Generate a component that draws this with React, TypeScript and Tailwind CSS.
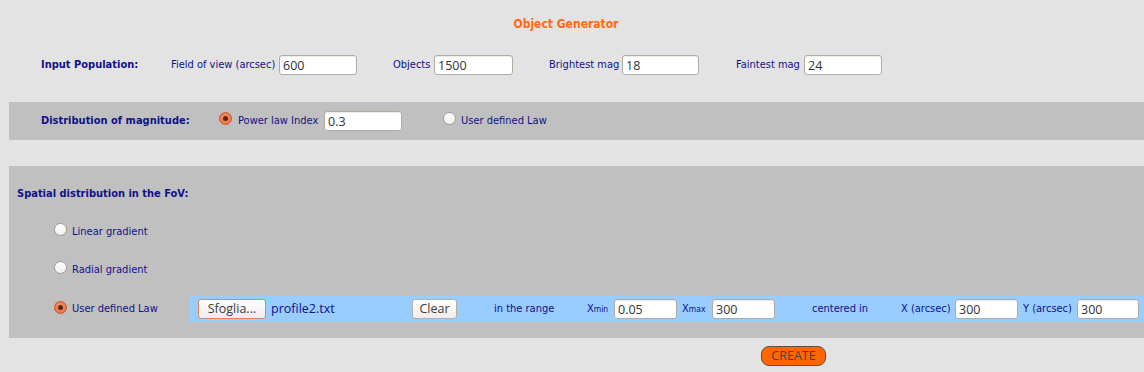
import React from "react";

const LABEL = "text-[11px] text-[#10108a] whitespace-nowrap";
const FONT = { fontFamily: '"DejaVu Sans Condensed", "Liberation Sans", sans-serif' };
const INFONT = { fontFamily: '"Open Sans", "DejaVu Sans", sans-serif' };

function Input({ value, w }: { value: string; w: string }) {
  return (
    <input
      readOnly
      defaultValue={value}
      style={INFONT}
      className={`${w} h-[20px] shrink-0 rounded-[3px] border border-[#b3aaa1] bg-white px-[3px] text-[12.5px] text-[#333] outline-none shadow-[inset_0_1px_1px_rgba(0,0,0,0.08)]`}
    />
  );
}

function Radio({ checked }: { checked?: boolean }) {
  if (checked) {
    return (
      <div className="flex h-[13px] w-[13px] shrink-0 items-center justify-center rounded-full border border-[#c4582c] bg-[radial-gradient(circle_at_50%_40%,#f8936a,#ea6a3a)]">
        <div className="h-[5px] w-[5px] rounded-full bg-[#5b2614]" />
      </div>
    );
  }
  return (
    <div className="h-[13px] w-[13px] shrink-0 rounded-full border border-[#a59d95] bg-[linear-gradient(#ffffff,#f1efed)]" />
  );
}

export default function App() {
  return (
    <div className="h-[372px] w-[1144px] overflow-hidden bg-[#e3e3e3]" style={FONT}>
      {/* Title */}
      <div className="flex h-[48px] items-center justify-center pr-[12px]">
        <span className="text-[12px] font-bold text-[#ff6a10]">Object Generator</span>
      </div>

      {/* Input population */}
      <div className="mt-[7px] flex h-[20px] items-center pl-[41px]">
        <div className={`${LABEL} w-[130px] font-bold`}>Input Population:</div>
        <div className={`${LABEL} w-[108px]`}>Field of view (arcsec)</div>
        <Input value="600" w="w-[78px]" />
        <div className={`${LABEL} w-[77px] pl-[36px]`}>Objects</div>
        <Input value="1500" w="w-[79px]" />
        <div className={`${LABEL} w-[109px] pl-[36px]`}>Brightest mag</div>
        <Input value="18" w="w-[77px]" />
        <div className={`${LABEL} w-[105px] pl-[37px]`}>Faintest mag</div>
        <Input value="24" w="w-[78px]" />
      </div>

      {/* Distribution of magnitude */}
      <div className="ml-[9px] mt-[27px] flex h-[38px] items-center bg-[#c0c0c0] pl-[32px]">
        <div className={`${LABEL} w-[178px] font-bold`}>Distribution of magnitude:</div>
        <div className="mb-[5px]">
          <Radio checked />
        </div>
        <div className={`${LABEL} w-[92px] pl-[6px]`}>Power law Index</div>
        <Input value="0.3" w="w-[78px]" />
        <div className="mb-[5px] ml-[41px]">
          <Radio />
        </div>
        <div className={`${LABEL} pl-[5px]`}>User defined Law</div>
      </div>

      {/* Spatial distribution */}
      <div className="ml-[9px] mt-[26px] flex h-[172px] flex-col bg-[#c0c0c0]">
        <div className={`${LABEL} mt-[21px] flex h-[14px] items-center pl-[8px] font-bold`}>
          Spatial distribution in the FoV:
        </div>
        <div className="mt-[24px] flex h-[14px] items-center pl-[45px]">
          <div className="mb-[5px]">
            <Radio />
          </div>
          <div className={`${LABEL} pl-[5px]`}>Linear gradient</div>
        </div>
        <div className="mt-[24px] flex h-[14px] items-center pl-[45px]">
          <div className="mb-[5px]">
            <Radio />
          </div>
          <div className={`${LABEL} pl-[5px]`}>Radial gradient</div>
        </div>
        <div className="mt-[19px] flex h-[26px] items-center">
          <div className="flex w-[181px] items-center pl-[45px]">
            <div className="mb-[3px]">
              <Radio checked />
            </div>
            <div className={`${LABEL} pl-[5px]`}>User defined Law</div>
          </div>
          <div className="flex h-[26px] flex-1 items-center bg-[#99ccff] pl-[8px]">
            <button
              style={INFONT}
              className="h-[20px] w-[68px] shrink-0 rounded-[3px] border border-[#e5855a] bg-[linear-gradient(#ffffff,#efedeb)] text-[12.5px] text-[#3c3c3c]"
            >
              Sfoglia...
            </button>
            <div style={INFONT} className="w-[146px] shrink-0 pl-[5px] text-[12.5px] text-[#10108a]">
              profile2.txt
            </div>
            <button
              style={INFONT}
              className="h-[20px] w-[45px] shrink-0 rounded-[3px] border border-[#b8b0a8] bg-[linear-gradient(#ffffff,#efedeb)] text-[12.5px] text-[#3c3c3c]"
            >
              Clear
            </button>
            <div className={`${LABEL} w-[130px] shrink-0 pl-[37px]`}>in the range</div>
            <div className={`${LABEL} w-[27px] shrink-0`}>
              X<span className="text-[8.5px]">min</span>
            </div>
            <Input value="0.05" w="w-[63px]" />
            <div className={`${LABEL} w-[35px] shrink-0 pl-[5px]`}>
              X<span className="text-[8.5px]">max</span>
            </div>
            <Input value="300" w="w-[63px]" />
            <div className={`${LABEL} w-[126px] shrink-0 pl-[37px]`}>centered in</div>
            <div className={`${LABEL} w-[54px] shrink-0`}>X (arcsec)</div>
            <Input value="300" w="w-[63px]" />
            <div className={`${LABEL} w-[59px] shrink-0 pl-[5px]`}>Y (arcsec)</div>
            <Input value="300" w="w-[62px]" />
          </div>
        </div>
      </div>

      {/* Create */}
      <div className="mt-[8px] flex h-[20px] pl-[761px]">
        <button
          style={INFONT}
          className="h-[20px] w-[65px] rounded-[8px] border border-[#5a5048] bg-[#ff6600] text-[12.5px] leading-none text-[#4f4038]"
        >
          CREATE
        </button>
      </div>
    </div>
  );
}
